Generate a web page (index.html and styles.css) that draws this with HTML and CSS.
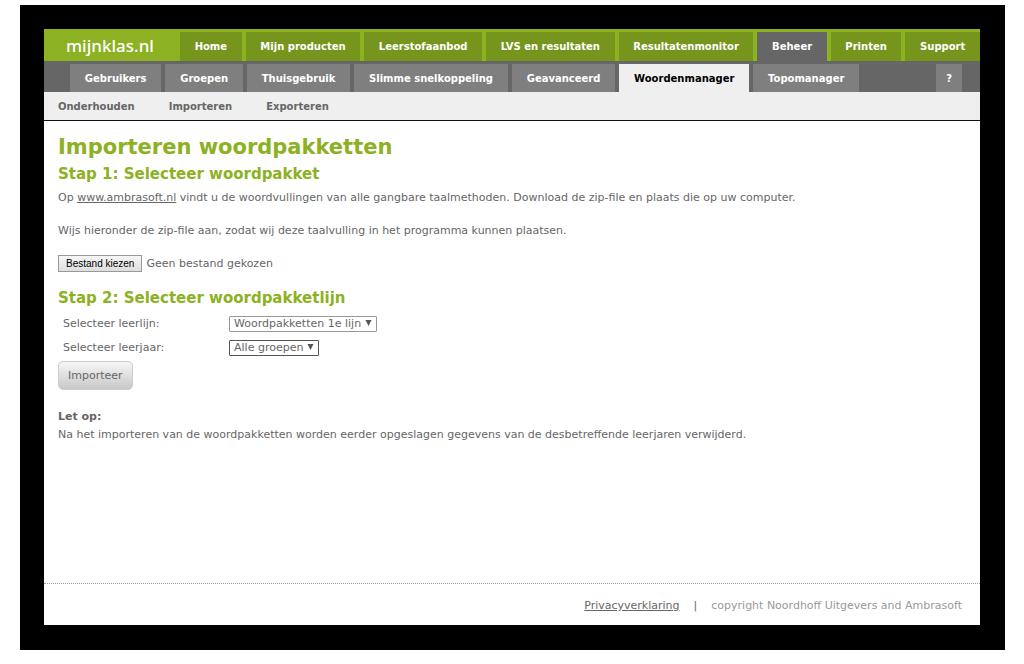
FILE: index.html
```html
<!DOCTYPE html>
<html lang="nl">
<head>
<meta charset="utf-8">
<title>mijnklas.nl - Woordenmanager</title>
<link rel="stylesheet" href="styles.css">
</head>
<body>
<div class="frame">
  <header>
    <div class="topbar">
      <a class="logo" href="#">mijnklas.nl</a>
      <nav class="main-nav">
        <a href="#">Home</a>
        <a href="#">Mijn producten</a>
        <a href="#">Leerstofaanbod</a>
        <a href="#">LVS en resultaten</a>
        <a href="#">Resultatenmonitor</a>
        <a class="active" href="#">Beheer</a>
        <a href="#">Printen</a>
        <a href="#">Support</a>
      </nav>
    </div>
    <nav class="tab-nav">
      <a href="#">Gebruikers</a>
      <a href="#">Groepen</a>
      <a href="#">Thuisgebruik</a>
      <a href="#">Slimme snelkoppeling</a>
      <a href="#">Geavanceerd</a>
      <a class="active" href="#">Woordenmanager</a>
      <a href="#">Topomanager</a>
      <a class="help" href="#">?</a>
    </nav>
    <nav class="sub-nav">
      <a href="#">Onderhouden</a>
      <a href="#">Importeren</a>
      <a href="#">Exporteren</a>
    </nav>
  </header>
  <main>
    <h1>Importeren woordpakketten</h1>
    <h2>Stap 1: Selecteer woordpakket</h2>
    <p>Op <a href="#">www.ambrasoft.nl</a> vindt u de woordvullingen van alle gangbare taalmethoden. Download de zip-file en plaats die op uw computer.</p>
    <p>Wijs hieronder de zip-file aan, zodat wij deze taalvulling in het programma kunnen plaatsen.</p>
    <label class="file">
      <input type="file">
      <span class="file-button">Bestand kiezen</span>
      <span>Geen bestand gekozen</span>
    </label>
    <h2>Stap 2: Selecteer woordpakketlijn</h2>
    <div class="fields">
      <div class="field">
        <label for="leerlijn">Selecteer leerlijn:</label>
        <span class="select">
          <select id="leerlijn"><option>Woordpakketten 1e lijn</option></select>
          <svg viewBox="0 0 7 7" aria-hidden="true"><path d="M0 0h7L3.5 7z"/></svg>
        </span>
      </div>
      <div class="field">
        <label for="leerjaar">Selecteer leerjaar:</label>
        <span class="select dark">
          <select id="leerjaar"><option>Alle groepen</option></select>
          <svg viewBox="0 0 7 7" aria-hidden="true"><path d="M0 0h7L3.5 7z"/></svg>
        </span>
      </div>
    </div>
    <button class="submit" type="button">Importeer</button>
    <h3>Let op:</h3>
    <p class="note">Na het importeren van de woordpakketten worden eerder opgeslagen gegevens van de desbetreffende leerjaren verwijderd.</p>
  </main>
  <footer>
    <a href="#">Privacyverklaring</a>
    <span>|</span>
    <span class="copyright">copyright Noordhoff Uitgevers and Ambrasoft</span>
  </footer>
</div>
</body>
</html>
```
FILE: styles.css
```css
* { box-sizing: border-box; }
body {
  margin: 0;
  padding: 5px 19px 14px 20px;
  min-height: 100vh;
  display: flex;
  background: #fff;
  color: #666;
  font: 11px/16px Verdana, "DejaVu Sans", sans-serif;
}
.frame {
  flex: 1;
  display: flex;
  flex-direction: column;
  border: solid #000;
  border-width: 24px 25px 25px 24px;
  background: #fff;
}
a { color: inherit; }
nav a { text-decoration: none; font-size: 10px; font-weight: bold; white-space: nowrap; }
.topbar { display: flex; height: 32px; background: #8cb122; }
.logo {
  width: 136px;
  padding-left: 22px;
  color: #fff;
  font: 500 17px/33px "Noto Sans", sans-serif;
  text-decoration: none;
}
.main-nav { flex: 1; display: flex; gap: 4px; padding-top: 3px; }
.main-nav a {
  flex: 1 1 auto;
  background: #76951d;
  color: #fff;
  line-height: 29px;
  text-align: center;
}
.main-nav .active { background: #666; }
.tab-nav {
  display: flex;
  gap: 4px;
  height: 31px;
  padding: 3px 18px 0 26px;
  background: #666;
}
.tab-nav a {
  flex: 1 1 auto;
  padding: 0 14px;
  background: #7f7f7f;
  color: #fff;
  line-height: 29px;
  text-align: center;
}
.tab-nav .active { background: #efefef; color: #000; }
.tab-nav .help { flex: none; margin-left: 73px; padding: 0 10px; }
.sub-nav {
  display: flex;
  gap: 34px;
  height: 29px;
  padding: 0 14px;
  border-bottom: 1px solid #111;
  background: #efefef;
  line-height: 29px;
}
main { flex: 1; padding: 12px 14px; }
h1, h2, h3, p { margin: 0; }
h1 { color: #8cb122; font-size: 21px; line-height: 28px; }
h2 { color: #8cb122; font-size: 15px; line-height: 26px; }
p { margin: 3px 0 17px; }
.file {
  position: relative;
  display: flex;
  align-items: center;
  gap: 4px;
  width: max-content;
  margin: -1px 0 13px;
}
.file input { position: absolute; inset: 0; width: 100%; opacity: 0; }
.file-button {
  padding: 0 7px;
  border: 1px solid #999;
  background: linear-gradient(#f6f6f6, #dedede);
  color: #000;
  font: 10px/15px "Liberation Sans", sans-serif;
}
.fields { padding: 1px 0 1px 5px; }
.field { display: flex; align-items: center; height: 24px; }
.field label { width: 166px; }
.select { position: relative; display: flex; }
.select svg { position: absolute; right: 5px; top: 4px; width: 7px; height: 6px; fill: #555; pointer-events: none; }
select {
  appearance: none;
  height: 16px;
  padding: 0 14px 0 4px;
  border: 1px solid #999;
  border-radius: 1px;
  background: #fff;
  color: #666;
  font: inherit;
  line-height: 14px;
}
.dark select { border-color: #555; }
.submit {
  display: block;
  height: 29px;
  margin: 0 0 19px;
  padding: 0 9px;
  border: 1px solid #ccc;
  border-radius: 5px;
  background: linear-gradient(#f6f6f6, #c8c8c8);
  color: #666;
  font: inherit;
}
h3 { font-size: 11px; line-height: 16px; }
.note { margin: 2px 0 0; }
footer {
  display: flex;
  justify-content: flex-end;
  gap: 14px;
  padding: 14px 18px 11px;
  border-top: 1px dotted #999;
}
.copyright { color: #999; }
```
